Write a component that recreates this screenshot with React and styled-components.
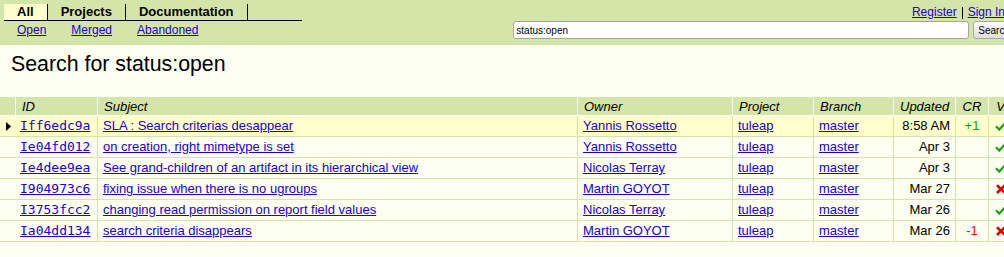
import React from 'react';
import styled, { createGlobalStyle } from 'styled-components';

const BG = '#fcfeef';
const TRIM = '#d4e5a9';
const SEL = '#ffffcc';
const LINK = '#2200cc';
const COLS = '16px 82px 480px 155px 81px 80px 62px 33px 24px';

const GlobalStyle = createGlobalStyle`
  html, body { margin: 0; padding: 0; overflow: hidden; background: ${BG}; }
  body { font-family: "Liberation Sans", Arial, sans-serif; font-size: 13px; color: #000; }
  a { color: ${LINK}; text-decoration: underline; }
`;

const Page = styled.div`
  width: 1020px;
`;

const Header = styled.header`
  display: flex;
  justify-content: space-between;
  align-items: flex-start;
  height: 45px;
  box-sizing: border-box;
  background: ${TRIM};
  padding: 0 5px 0 4px;
`;

const LeftMenus = styled.div`
  padding-top: 4px;
`;

const TabBar = styled.nav`
  display: flex;
  width: 298px;
  border-bottom: 1px solid #000;
`;

const Tab = styled.div`
  padding: 0 13px;
  line-height: 16px;
  font-size: 13px;
  font-weight: bold;
  border-right: 1px solid #000;
  background: ${(p) => (p.$active ? SEL : 'transparent')};
`;

const SubMenu = styled.div`
  display: flex;
  padding-top: 2px;
  margin-left: 0.5px;
  line-height: 14px;
  font-size: 12px;
`;

const SubLink = styled.a`
  padding: 0 12.5px;
`;

const RightMenus = styled.div`
  display: flex;
  flex-direction: column;
  align-items: flex-end;
  padding-top: 5px;
`;

const LinkRow = styled.div`
  display: flex;
  align-items: flex-start;
  line-height: 14px;
  font-size: 12px;
  padding-right: 5px;
`;

const TopLink = styled.a`
  padding: 0 5px;
`;

const Divider = styled.span`
  width: 1px;
  height: 12px;
  margin-top: 2px;
  background: #000;
`;

const SearchRow = styled.form`
  display: flex;
  gap: 4px;
  margin: 2px 0 0;
`;

const SearchInput = styled.input`
  width: 456px;
  height: 18px;
  box-sizing: border-box;
  border: 1px solid #a4a4a4;
  border-radius: 3px;
  padding: 0 2px;
  font-family: "Liberation Sans", Arial, sans-serif;
  font-size: 10px;
  color: #000;
  background: #fff;
  outline: none;
`;

const SearchButton = styled.button`
  height: 18px;
  box-sizing: border-box;
  padding: 0 4px;
  border: 1px solid #a8a8a8;
  border-radius: 3px;
  font-family: "Liberation Sans", Arial, sans-serif;
  font-size: 10px;
  color: #000;
  background: linear-gradient(#fbfbfb, #dedede);
`;

const Title = styled.h1`
  margin: 7px 0 0;
  padding-left: 11px;
  font-size: 21.33px;
  font-weight: normal;
  line-height: 24px;
`;

const Table = styled.div`
  margin-top: 21px;
`;

const Row = styled.div`
  display: grid;
  grid-template-columns: ${COLS};
  background: ${(p) => (p.$selected ? SEL : 'transparent')};
`;

const HeadCell = styled.div`
  background: ${TRIM};
  border-right: 1px solid ${BG};
  border-bottom: 1px solid ${BG};
  padding: 1px 6px 0;
  line-height: 17px;
  font-style: italic;
  white-space: nowrap;
  overflow: hidden;
  text-align: ${(p) => p.$align || 'left'};
`;

const Cell = styled.div`
  height: 21px;
  box-sizing: border-box;
  border-right: 1px solid ${TRIM};
  border-bottom: 1px solid ${TRIM};
  padding: 0 5px;
  line-height: 20px;
  white-space: nowrap;
  overflow: hidden;
  text-align: ${(p) => p.$align || 'left'};
`;

const IconCell = styled.div`
  height: 21px;
  box-sizing: border-box;
  border-bottom: 1px solid ${TRIM};
  display: flex;
  align-items: center;
  padding-left: 6px;
`;

const IdCell = styled(Cell)`
  padding-left: 4px;
`;

const IdLink = styled.a`
  font-family: "DejaVu Sans Mono", monospace;
  font-size: 13px;
`;

const Score = styled.span`
  color: ${(p) => (p.$value > 0 ? '#08a400' : '#ff0000')};
`;

const VerifyCell = styled(Cell)`
  display: flex;
  align-items: center;
  justify-content: center;
  padding: 0;
`;

const Pointer = () => (
  <svg width="5" height="9" viewBox="0 0 5 9">
    <polygon points="0,0 5,4.5 0,9" fill="#000" />
  </svg>
);

const Check = () => (
  <svg width="12" height="10" viewBox="0 0 12 10">
    <path d="M1 5.2 L4.3 8.6 L11 1.2" fill="none" stroke="#1aa31a" strokeWidth="2.2" />
  </svg>
);

const Cross = () => (
  <svg width="12" height="10" viewBox="0 0 12 10">
    <path d="M2 1.2 L10 9 M10 1.2 L2 9" fill="none" stroke="#dd0000" strokeWidth="2.6" />
  </svg>
);

const changes = [
  { id: 'Iff6edc9a', subject: 'SLA : Search criterias desappear', owner: 'Yannis Rossetto', updated: '8:58 AM', cr: 1, v: true, selected: true },
  { id: 'Ie04fd012', subject: 'on creation, right mimetype is set', owner: 'Yannis Rossetto', updated: 'Apr 3', v: true },
  { id: 'Ie4dee9ea', subject: 'See grand-children of an artifact in its hierarchical view', owner: 'Nicolas Terray', updated: 'Apr 3', v: true },
  { id: 'I904973c6', subject: 'fixing issue when there is no ugroups', owner: 'Martin GOYOT', updated: 'Mar 27', v: false },
  { id: 'I3753fcc2', subject: 'changing read permission on report field values', owner: 'Nicolas Terray', updated: 'Mar 26', v: true },
  { id: 'Ia04dd134', subject: 'search criteria disappears', owner: 'Martin GOYOT', updated: 'Mar 26', cr: -1, v: false },
];

export default function App() {
  return (
    <Page>
      <GlobalStyle />
      <Header>
        <LeftMenus>
          <TabBar>
            <Tab $active>All</Tab>
            <Tab>Projects</Tab>
            <Tab>Documentation</Tab>
          </TabBar>
          <SubMenu>
            <SubLink href="#">Open</SubLink>
            <SubLink href="#">Merged</SubLink>
            <SubLink href="#">Abandoned</SubLink>
          </SubMenu>
        </LeftMenus>
        <RightMenus>
          <LinkRow>
            <TopLink href="#">Register</TopLink>
            <Divider />
            <TopLink href="#">Sign In</TopLink>
          </LinkRow>
          <SearchRow onSubmit={(e) => e.preventDefault()}>
            <SearchInput defaultValue="status:open" />
            <SearchButton type="submit">Search</SearchButton>
          </SearchRow>
        </RightMenus>
      </Header>
      <Title>Search for status:open</Title>
      <Table>
        <Row>
          <HeadCell />
          <HeadCell>ID</HeadCell>
          <HeadCell>Subject</HeadCell>
          <HeadCell>Owner</HeadCell>
          <HeadCell>Project</HeadCell>
          <HeadCell>Branch</HeadCell>
          <HeadCell $align="right">Updated</HeadCell>
          <HeadCell $align="center">CR</HeadCell>
          <HeadCell $align="center">V</HeadCell>
        </Row>
        {changes.map((c) => (
          <Row key={c.id} $selected={c.selected}>
            <IconCell>{c.selected && <Pointer />}</IconCell>
            <IdCell><IdLink href="#">{c.id}</IdLink></IdCell>
            <Cell><a href="#">{c.subject}</a></Cell>
            <Cell><a href="#">{c.owner}</a></Cell>
            <Cell><a href="#">tuleap</a></Cell>
            <Cell><a href="#">master</a></Cell>
            <Cell $align="right">{c.updated}</Cell>
            <Cell $align="center">
              {c.cr ? <Score $value={c.cr}>{c.cr > 0 ? `+${c.cr}` : c.cr}</Score> : null}
            </Cell>
            <VerifyCell>{c.v ? <Check /> : <Cross />}</VerifyCell>
          </Row>
        ))}
      </Table>
    </Page>
  );
}
